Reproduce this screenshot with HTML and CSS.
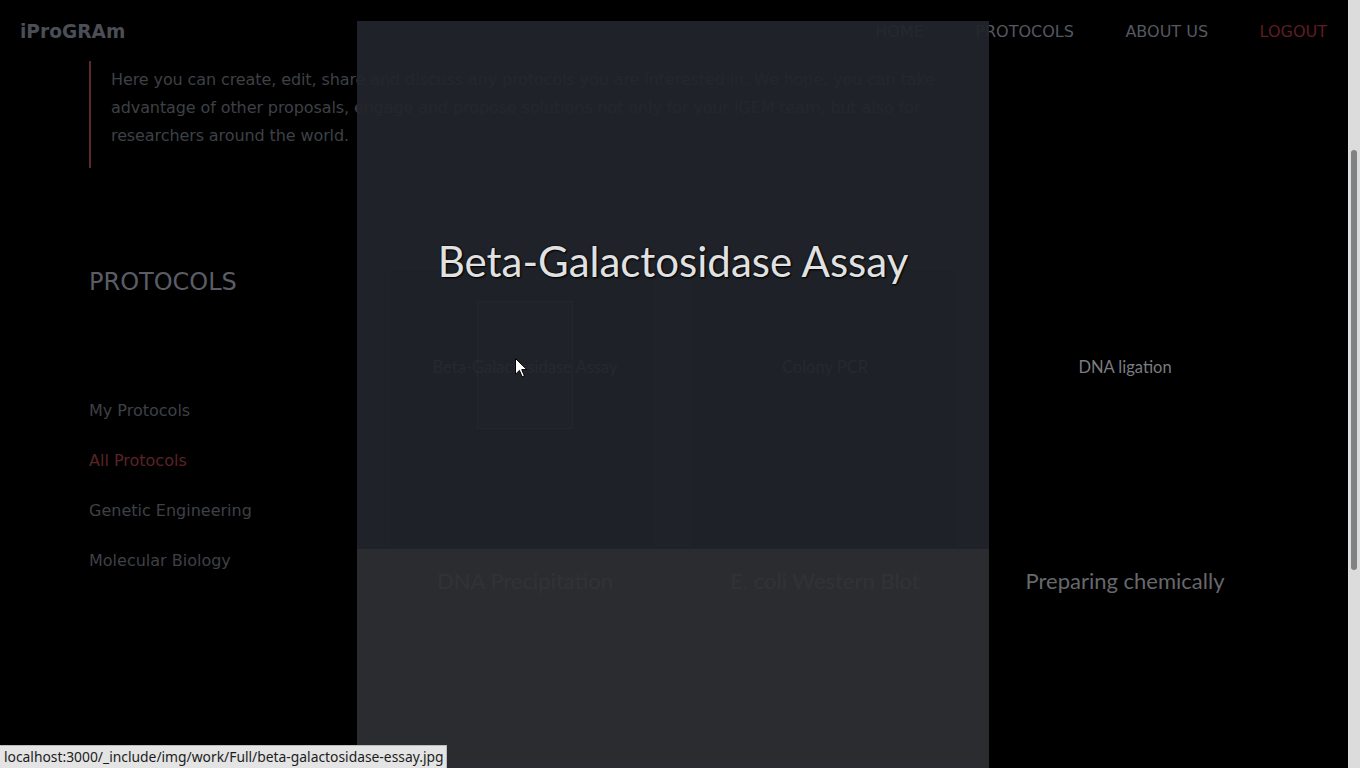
FILE: index.html
```html
<!DOCTYPE html>
<html lang="en">
<head>
<meta charset="utf-8">
<title>iProGRAm - Protocols</title>
<link rel="stylesheet" href="styles.css">
</head>
<body>
<div class="window">
  <div class="page">
    <header class="topbar">
      <div class="logo">iProGRAm</div>
      <nav class="nav">
        <a class="nav-link">HOME</a>
        <a class="nav-link">PROTOCOLS</a>
        <a class="nav-link">ABOUT US</a>
        <a class="nav-link nav-logout">LOGOUT</a>
      </nav>
    </header>

    <blockquote class="intro">
      Here you can create, edit, share and discuss any protocols you are interested in. We hope, you can take advantage of other proposals, engage and propose solutions not only for your iGEM team, but also for researchers around the world.
    </blockquote>

    <section class="protocols">
      <aside class="sidebar">
        <h2 class="sidebar-title">PROTOCOLS</h2>
        <ul class="sidebar-list">
          <li class="sidebar-item">My Protocols</li>
          <li class="sidebar-item active">All Protocols</li>
          <li class="sidebar-item">Genetic Engineering</li>
          <li class="sidebar-item">Molecular Biology</li>
        </ul>
      </aside>
      <div class="grid">
        <div class="card"><span class="card-title small">Beta-Galactosidase Assay</span></div>
        <div class="card"><span class="card-title small">Colony PCR</span></div>
        <div class="card"><span class="card-title small bright">DNA ligation</span></div>
        <div class="card"><span class="card-title large">DNA Precipitation</span></div>
        <div class="card"><span class="card-title large">E. coli Western Blot</span></div>
        <div class="card"><span class="card-title large">Preparing chemically</span></div>
      </div>
    </section>
  </div>

  <div class="scrollbar"><div class="scroll-thumb"></div></div>

  <div class="lightbox">
    <div class="lb-top">
      <div class="lb-panels">
        <div class="lb-panel"><div class="lb-inner"></div></div>
        <div class="lb-panel lb-panel-2"></div>
      </div>
      <h1 class="lb-title">Beta-Galactosidase Assay</h1>
    </div>
    <div class="lb-bottom"></div>
  </div>

  <svg class="cursor" width="13" height="20" viewBox="0 0 13 20">
    <path d="M0.5 0.5 L0.5 16.2 L4.4 12.4 L7.2 18.8 L9.4 17.8 L6.7 11.6 L11.8 11.6 Z" fill="#ffffff" stroke="#000000" stroke-width="1" stroke-linejoin="round"/>
  </svg>

  <div class="statusbar">localhost:3000/_include/img/work/Full/beta-galactosidase-essay.jpg</div>
</div>
</body>
</html>
```

FILE: styles.css
```css
* { box-sizing: border-box; }

html, body {
  margin: 0;
  padding: 0;
  background: #000;
  overflow: hidden;
}

.window {
  position: relative;
  width: 1360px;
  height: 768px;
  display: flex;
  overflow: hidden;
  font-family: "DejaVu Sans", sans-serif;
}

.page {
  width: 1348px;
  height: 768px;
  background: #000;
}

/* header */
.topbar {
  height: 61px;
  display: flex;
  align-items: center;
  justify-content: space-between;
  padding: 2px 21px 0 20px;
}

.logo {
  font-weight: bold;
  font-size: 18.6px;
  color: #4b4e56;
}

.nav {
  display: flex;
  gap: 51.5px;
}

.nav-link {
  font-size: 16px;
  color: #55585f;
  text-decoration: none;
}

.nav-logout { color: #5e1d22; }

/* intro */
.intro {
  margin: 0 0 0 89px;
  width: 872px;
  padding: 5px 0 18px 20px;
  border-left: 2px solid #5a2a2e;
  font-size: 16px;
  line-height: 28px;
  letter-spacing: -0.1px;
  color: #3e4046;
}

/* protocols section */
.protocols {
  display: flex;
  margin-top: 99px;
  padding-left: 89px;
}

.sidebar {
  width: 286px;
  flex: none;
}

.sidebar-title {
  margin: 0;
  font-size: 24px;
  line-height: 30px;
  font-weight: normal;
  color: #5a5d66;
}

.sidebar-list {
  list-style: none;
  margin: 89px 0 0;
  padding: 0;
}

.sidebar-item {
  font-size: 16px;
  line-height: 50px;
  color: #3e4047;
}

.sidebar-item.active { color: #5a2327; }

.grid {
  display: grid;
  grid-template-columns: repeat(3, 300px);
  row-gap: 14px;
}

.card {
  height: 200px;
  display: flex;
  align-items: center;
  justify-content: center;
}

.card-title {
  font-family: Lato, "DejaVu Sans", sans-serif;
}

.card-title.small {
  font-size: 16.5px;
  line-height: 20px;
  color: #76787c;
}

.card-title.bright { color: #7a7c80; }

.card-title.large {
  font-size: 22px;
  line-height: 28px;
  color: #67686c;
}

/* fake browser scrollbar */
.scrollbar {
  width: 12px;
  height: 768px;
  flex: none;
  background: #dcdcdc;
  border-left: 1px solid #e6e6e6;
  padding: 150px 2px 0 2px;
}

.scroll-thumb {
  width: 6px;
  height: 420px;
  border-radius: 3px;
  background: #808182;
}

/* lightbox */
.lightbox {
  position: absolute;
  left: 357px;
  top: 21px;
  width: 632px;
  height: 747px;
  display: flex;
  flex-direction: column;
  opacity: 0.94;
}

.lb-top {
  height: 528px;
  background: #22252c;
  display: grid;
}

.lb-panels {
  grid-area: 1 / 1;
  margin-top: 247px;
  display: flex;
  gap: 35px;
  padding-left: 32px;
}

.lb-panel {
  width: 266px;
  height: 281px;
  background: #20242a;
  border: 1px solid #23272d;
  padding: 32px 0 0 87px;
}

.lb-panel-2 { width: 268px; }

.lb-inner {
  width: 96px;
  height: 128px;
  border: 1px solid #262a30;
  background: #21252b;
}

.lb-title {
  grid-area: 1 / 1;
  align-self: start;
  margin: 214px 0 0;
  text-align: center;
  font-family: Lato, "Open Sans", sans-serif;
  font-weight: normal;
  font-size: 42px;
  line-height: 52px;
  color: #f0f0f0;
  text-shadow: 1px 1px 2px #000, 0 0 2px #000;
}

.lb-bottom {
  flex: 1;
  background: #2e2f34;
}

.cursor {
  position: absolute;
  left: 515px;
  top: 358px;
}

.statusbar {
  position: absolute;
  left: 0;
  bottom: 0;
  height: 23px;
  padding: 0 3px 0 4px;
  background: #e4e4e4;
  border-top: 1px solid #bcbcbc;
  border-right: 1px solid #bcbcbc;
  font-family: "Noto Sans", sans-serif;
  font-size: 13.85px;
  line-height: 22px;
  color: #1c1c1c;
}
```
